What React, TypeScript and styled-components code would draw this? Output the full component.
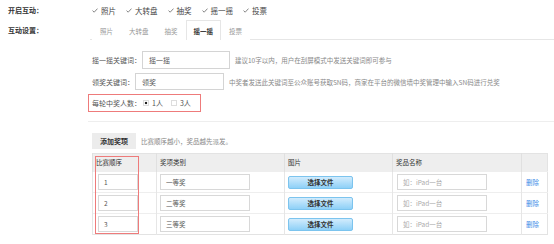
import styled, { createGlobalStyle } from "styled-components";

const GlobalStyle = createGlobalStyle`
  html, body {
    margin: 0;
    padding: 0;
    background: #fff;
    font-family: "Noto Sans CJK SC", "Noto Sans", sans-serif;
    color: #444;
  }
`;

const interactions = ["照片", "大转盘", "抽奖", "摇一摇", "投票"];
const prizes = [
  { order: "1", name: "一等奖" },
  { order: "2", name: "二等奖" },
  { order: "3", name: "三等奖" },
];

const Check = () => (
  <svg width="6" height="5" viewBox="0 0 6 5">
    <polyline points="0.5,2.6 2.2,4.2 5.5,0.6" fill="none" stroke="#777" strokeWidth="0.9" />
  </svg>
);

const App = () => {
  return (
    <Page>
      <GlobalStyle />
      <Row $h={16} $mt={2}>
        <RowLabel>开启互动：</RowLabel>
        <CheckList>
          {interactions.map((t) => (
            <CheckItem key={t}>
              <Check />
              <span>{t}</span>
            </CheckItem>
          ))}
        </CheckList>
      </Row>

      <Row $h={20} $mt={2}>
        <RowLabel>互动设置：</RowLabel>
        <TabBar>
          {interactions.map((t) => (
            <Tab key={t} $active={t === "摇一摇"}>
              {t}
            </Tab>
          ))}
        </TabBar>
      </Row>

      <Panel>
        <FieldRow $mt={11}>
          <FieldLabel>摇一摇关键词：</FieldLabel>
          <TextBox $w={88} $h={18}>摇一摇</TextBox>
          <Hint>建议10字以内，用户在刮屏模式中发送关键词即可参与</Hint>
        </FieldRow>
        <FieldRow $mt={4}>
          <FieldLabel>领奖关键词：</FieldLabel>
          <TextBox $w={89} $h={17}>领奖</TextBox>
          <Hint>中奖者发送此关键词至公众账号获取SN码，商家在平台的微信墙中奖管理中输入SN码进行兑奖</Hint>
        </FieldRow>

        <WinnerBox>
          <FieldLabel>每轮中奖人数：</FieldLabel>
          <Radio $checked />
          <Option>1人</Option>
          <Radio />
          <Option>3人</Option>
        </WinnerBox>

        <Separator />

        <ActionRow>
          <AddButton>添加奖项</AddButton>
          <Hint>比赛顺序越小，奖品越先派发。</Hint>
        </ActionRow>

        <TableWrap>
          <PrizeTable>
            <colgroup>
              <col style={{ width: 64 }} />
              <col style={{ width: 128 }} />
              <col style={{ width: 108 }} />
              <col style={{ width: 129 }} />
              <col style={{ width: 26 }} />
            </colgroup>
            <thead>
              <tr>
                <Th $pl={3}>比赛顺序</Th>
                <Th>奖项类别</Th>
                <Th>图片</Th>
                <Th>奖品名称</Th>
                <Th />
              </tr>
            </thead>
            <tbody>
              {prizes.map((p) => (
                <tr key={p.order}>
                  <Td $pl={5}>
                    <CellInput $w={40}>{p.order}</CellInput>
                  </Td>
                  <Td>
                    <CellInput $w={90}>{p.name}</CellInput>
                  </Td>
                  <Td>
                    <FileButton>选择文件</FileButton>
                  </Td>
                  <Td $pl={4}>
                    <CellInput $w={90} $placeholder>如：iPad一台</CellInput>
                  </Td>
                  <Td $pl={4}>
                    <DeleteLink>删除</DeleteLink>
                  </Td>
                </tr>
              ))}
            </tbody>
          </PrizeTable>
          <OrderMark />
        </TableWrap>
      </Panel>
    </Page>
  );
};

export default App;

const Page = styled.div`
  width: 554px;
  height: 244px;
  overflow: hidden;
  padding-left: 8px;
  box-sizing: border-box;
`;

const Row = styled.div<{ $h: number; $mt: number }>`
  display: flex;
  align-items: center;
  height: ${(p) => p.$h}px;
  margin-top: ${(p) => p.$mt}px;
`;

const RowLabel = styled.div`
  width: 82px;
  flex: none;
  font-size: 7px;
  font-weight: bold;
  color: #333;
`;

const CheckList = styled.div`
  display: flex;
  align-items: center;
  gap: 10px;
  padding-left: 2px;
`;

const CheckItem = styled.label`
  display: flex;
  align-items: center;
  gap: 3px;
  font-size: 7.5px;
  color: #444;
`;

const TabBar = styled.div`
  flex: 1;
  align-self: stretch;
  display: flex;
  align-items: stretch;
  padding-left: 2px;
  border-bottom: 1px solid #e6e6e6;
`;

const Tab = styled.div<{ $active?: boolean }>`
  display: flex;
  align-items: center;
  padding: 0 7px;
  font-size: 6.5px;
  color: ${(p) => (p.$active ? "#333" : "#999")};
  border: 1px solid ${(p) => (p.$active ? "#e6e6e6" : "transparent")};
  border-bottom: none;
  margin-bottom: -1px;
  background: #fff;
  font-weight: ${(p) => (p.$active ? "bold" : "normal")};
`;

const Panel = styled.div`
  margin-left: 80px;
`;

const FieldRow = styled.div<{ $mt: number }>`
  display: flex;
  align-items: center;
  padding-left: 4px;
  margin-top: ${(p) => p.$mt}px;
`;

const FieldLabel = styled.span`
  font-size: 7px;
  color: #555;
  white-space: nowrap;
`;

const TextBox = styled.div<{ $w: number; $h: number }>`
  width: ${(p) => p.$w}px;
  height: ${(p) => p.$h}px;
  box-sizing: border-box;
  border: 1px solid #d4d4d4;
  display: flex;
  align-items: center;
  padding-left: 6px;
  font-size: 7px;
  color: #555;
  margin-left: 1px;
  flex: none;
`;

const Hint = styled.span`
  font-size: 6.5px;
  color: #888;
  margin-left: 5px;
  white-space: nowrap;
`;

const WinnerBox = styled.div`
  display: flex;
  align-items: center;
  width: 113px;
  height: 18px;
  box-sizing: border-box;
  margin-top: 4px;
  padding-left: 3px;
  border: 1px solid #ee7b7b;
`;

const Radio = styled.span<{ $checked?: boolean }>`
  width: 6px;
  height: 6px;
  box-sizing: border-box;
  border: 1px solid #ddd;
  margin: 0 3px 0 2px;
  background: ${(p) =>
    p.$checked ? "radial-gradient(circle, #222 0 1.3px, #fff 1.6px)" : "#fff"};
`;

const Option = styled.span`
  font-size: 7px;
  color: #555;
  margin-right: 6px;
`;

const Separator = styled.div`
  margin-top: 9px;
  height: 1px;
  background: #eee;
`;

const ActionRow = styled.div`
  display: flex;
  align-items: center;
  padding-left: 4px;
  margin-top: 11px;
`;

const AddButton = styled.div`
  width: 44px;
  height: 16px;
  display: flex;
  align-items: center;
  justify-content: center;
  background: #ececec;
  font-size: 7px;
  font-weight: bold;
  color: #333;
`;

const TableWrap = styled.div`
  position: relative;
  margin: 4px 0 0 4px;
  width: 455px;
`;

const PrizeTable = styled.table`
  width: 455px;
  border-collapse: collapse;
  table-layout: fixed;
  border: 1px solid #e3e3e3;
  font-size: 6.5px;
  line-height: 1;
`;

const Th = styled.th<{ $pl?: number }>`
  height: 17px;
  padding: 0 0 0 ${(p) => p.$pl ?? 3}px;
  background: #eee;
  border-left: 1px solid #e0e0e0;
  font-size: 6.5px;
  font-weight: normal;
  color: #333;
  text-align: left;
  vertical-align: middle;
`;

const Td = styled.td<{ $pl?: number }>`
  height: 20px;
  padding: 0 0 0 ${(p) => p.$pl ?? 3}px;
  border-left: 1px solid #e6e6e6;
  border-top: 1px solid #eee;
  vertical-align: middle;
`;

const CellInput = styled.div<{ $w: number; $placeholder?: boolean }>`
  width: ${(p) => p.$w}px;
  height: 16px;
  box-sizing: border-box;
  border: 1px solid #d8d8d8;
  display: flex;
  align-items: center;
  padding-left: 5px;
  font-size: 6.5px;
  color: ${(p) => (p.$placeholder ? "#aaa" : "#555")};
`;

const FileButton = styled.div`
  width: 65px;
  height: 13px;
  box-sizing: border-box;
  border: 1px solid #7cc4ee;
  border-radius: 2px;
  background: linear-gradient(#d2ecfd, #8ed0f7);
  display: flex;
  align-items: center;
  justify-content: center;
  font-size: 6.5px;
  font-weight: bold;
  color: #333;
`;

const DeleteLink = styled.span`
  font-size: 6.5px;
  color: #3d8ee8;
`;

const OrderMark = styled.div`
  position: absolute;
  left: 3px;
  top: 3px;
  width: 44px;
  height: 78px;
  box-sizing: border-box;
  border: 1px solid #ee7b7b;
  pointer-events: none;
`;
